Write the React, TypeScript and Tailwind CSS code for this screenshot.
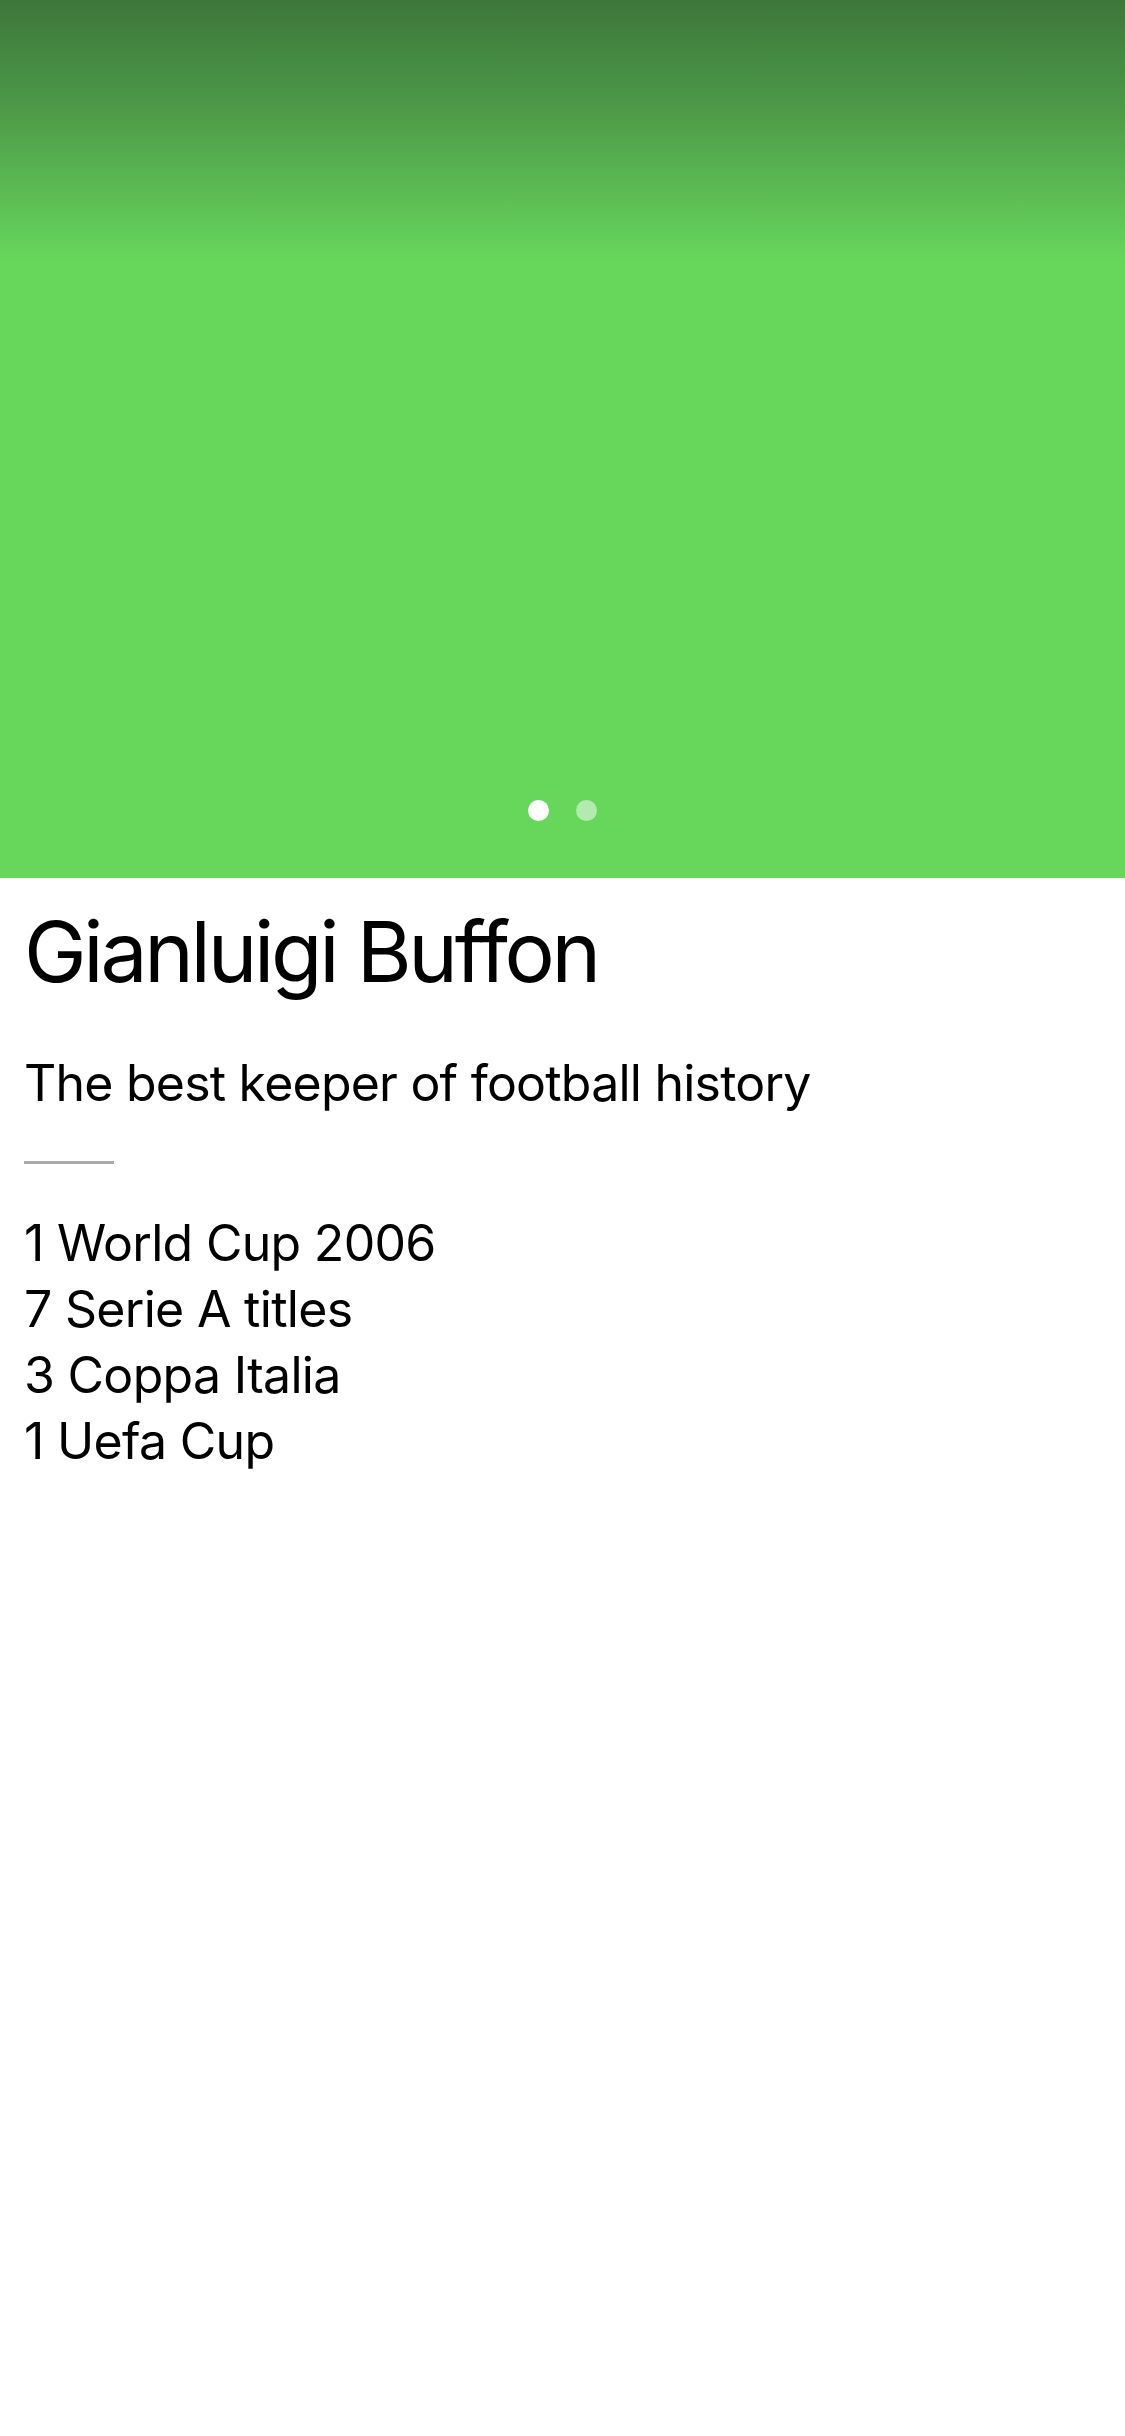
import React from "react";

const titles = ["1 World Cup 2006", "7 Serie A titles", "3 Coppa Italia", "1 Uefa Cup"];

export default function App() {
    return (
        <div className="min-h-[2436px] w-[1125px] bg-white font-['Inter','Liberation_Sans',sans-serif] text-black">
            {/* header slider */}
            <div className="flex h-[878px] w-full flex-col justify-end bg-[#67d75c] bg-[linear-gradient(to_bottom,#3d773b_0px,#4d9a48_110px,#67d75c_262px)] pb-[57px]">
                <div className="flex items-center justify-center gap-[27px]">
                    <span className="h-[21px] w-[21px] rounded-full bg-white"></span>
                    <span className="h-[21px] w-[21px] rounded-full bg-white/50"></span>
                </div>
            </div>

            <div className="px-[24px]">
                <h1 className="mt-[24px] text-[84px] leading-[100px] font-normal tracking-[-3.3px] [font-variant-ligatures:none]">
                    Gianluigi Buffon
                </h1>
                <p className="mt-[51px] text-[50px] leading-[60px] tracking-[-0.78px]">
                    The best keeper of football history
                </p>
                <div className="mt-[48px] h-[3px] w-[90px] bg-[#aaaaaa]"></div>
                <ul className="mt-[46px]">
                    {titles.map((t) => (
                        <li key={t} className="text-[50px] leading-[66px] tracking-[-0.7px]">
                            {t}
                        </li>
                    ))}
                </ul>
            </div>
        </div>
    );
}
